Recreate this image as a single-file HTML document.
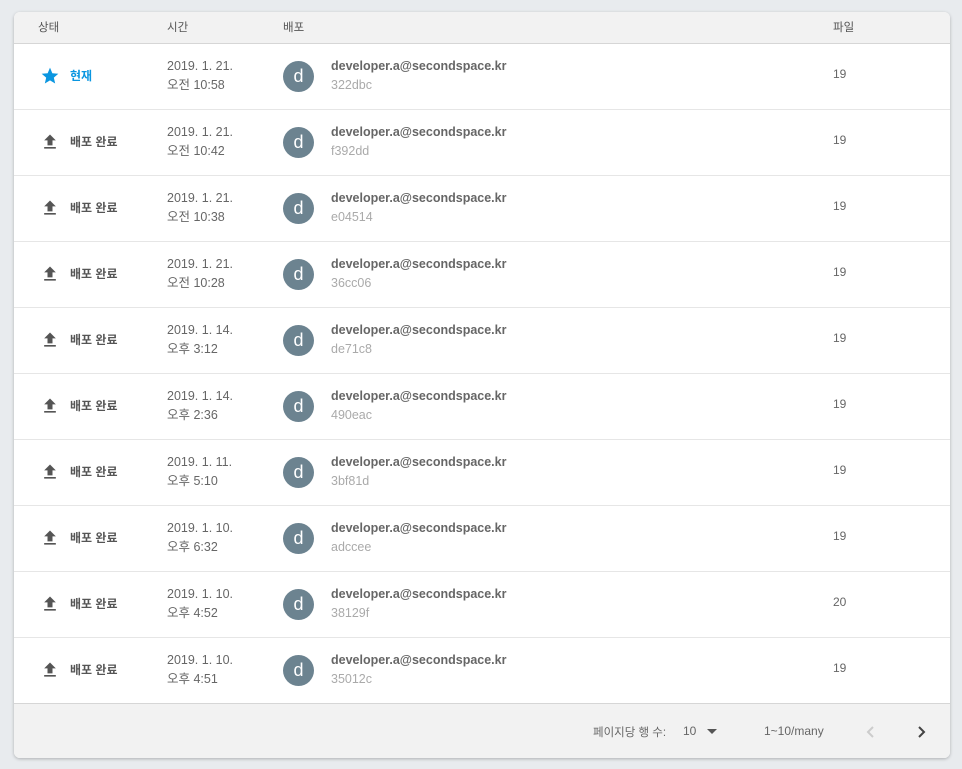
<!DOCTYPE html>
<html><head><meta charset="utf-8"><style>
*{margin:0;padding:0;box-sizing:border-box}
body{width:962px;height:769px;background:#e8ebee;font-family:"Liberation Sans","Noto Sans CJK KR",sans-serif;position:relative;overflow:hidden}
.card{position:absolute;left:14px;top:12px;width:936px;height:746px;background:#fff;border-radius:6px;box-shadow:0 1px 3px rgba(0,0,0,.25);overflow:hidden}
.hd{height:32px;background:#f2f2f2;border-bottom:1px solid #d6d6d6;position:relative;font-size:11.5px;color:#555}
.hd span{position:absolute;top:7px}
.row{height:66px;border-bottom:1px solid #e6e6e6;position:relative;font-size:12px;color:#555}
.row>*{position:absolute}
.ic{left:26px;top:22px}
.st{left:56px;top:23px;font-weight:bold;color:#555}
.tm{left:153px;top:13px;line-height:19px;color:#666;font-size:12.5px}
.av{left:269px;top:17px;width:31px;height:31px;border-radius:50%;background:#6c8390;color:#fff;font-size:18px;text-align:center;line-height:30px}
.em{left:317px;top:13px;line-height:19px;font-weight:bold;color:#666;font-size:12.5px}
.em i{font-style:normal;font-weight:normal;color:#aaa;display:block}
.fl{left:819px;top:23px;color:#666}
.ft{height:55px;background:#f2f2f2;position:relative;font-size:11.5px;color:#666}
.ft>*{position:absolute;top:20px}
</style></head><body>
<div class="card">
<div class="hd"><span style="left:24px">상태</span><span style="left:153px">시간</span><span style="left:269px">배포</span><span style="left:819px">파일</span></div>
<div class="row"><svg class="ic" width="20" height="20" viewBox="0 0 24 24"><path fill="#0a96e0" d="M12 17.3l6.2 3.7-1.6-7 5.4-4.7-7.2-.6L12 2 9.2 8.7 2 9.3l5.4 4.7-1.6 7z"/></svg><span class="st" style="color:#0a96e0">현재</span><div class="tm">2019. 1. 21.<br>오전 10:58</div><div class="av">d</div><div class="em">developer.a@secondspace.kr<i>322dbc</i></div><div class="fl">19</div></div>
<div class="row"><svg class="ic" width="20" height="20" viewBox="0 0 24 24"><path fill="#555" d="M9 16h6v-6h4l-7-7-7 7h4zm-4 2h14v2H5z"/></svg><span class="st">배포 완료</span><div class="tm">2019. 1. 21.<br>오전 10:42</div><div class="av">d</div><div class="em">developer.a@secondspace.kr<i>f392dd</i></div><div class="fl">19</div></div>
<div class="row"><svg class="ic" width="20" height="20" viewBox="0 0 24 24"><path fill="#555" d="M9 16h6v-6h4l-7-7-7 7h4zm-4 2h14v2H5z"/></svg><span class="st">배포 완료</span><div class="tm">2019. 1. 21.<br>오전 10:38</div><div class="av">d</div><div class="em">developer.a@secondspace.kr<i>e04514</i></div><div class="fl">19</div></div>
<div class="row"><svg class="ic" width="20" height="20" viewBox="0 0 24 24"><path fill="#555" d="M9 16h6v-6h4l-7-7-7 7h4zm-4 2h14v2H5z"/></svg><span class="st">배포 완료</span><div class="tm">2019. 1. 21.<br>오전 10:28</div><div class="av">d</div><div class="em">developer.a@secondspace.kr<i>36cc06</i></div><div class="fl">19</div></div>
<div class="row"><svg class="ic" width="20" height="20" viewBox="0 0 24 24"><path fill="#555" d="M9 16h6v-6h4l-7-7-7 7h4zm-4 2h14v2H5z"/></svg><span class="st">배포 완료</span><div class="tm">2019. 1. 14.<br>오후 3:12</div><div class="av">d</div><div class="em">developer.a@secondspace.kr<i>de71c8</i></div><div class="fl">19</div></div>
<div class="row"><svg class="ic" width="20" height="20" viewBox="0 0 24 24"><path fill="#555" d="M9 16h6v-6h4l-7-7-7 7h4zm-4 2h14v2H5z"/></svg><span class="st">배포 완료</span><div class="tm">2019. 1. 14.<br>오후 2:36</div><div class="av">d</div><div class="em">developer.a@secondspace.kr<i>490eac</i></div><div class="fl">19</div></div>
<div class="row"><svg class="ic" width="20" height="20" viewBox="0 0 24 24"><path fill="#555" d="M9 16h6v-6h4l-7-7-7 7h4zm-4 2h14v2H5z"/></svg><span class="st">배포 완료</span><div class="tm">2019. 1. 11.<br>오후 5:10</div><div class="av">d</div><div class="em">developer.a@secondspace.kr<i>3bf81d</i></div><div class="fl">19</div></div>
<div class="row"><svg class="ic" width="20" height="20" viewBox="0 0 24 24"><path fill="#555" d="M9 16h6v-6h4l-7-7-7 7h4zm-4 2h14v2H5z"/></svg><span class="st">배포 완료</span><div class="tm">2019. 1. 10.<br>오후 6:32</div><div class="av">d</div><div class="em">developer.a@secondspace.kr<i>adccee</i></div><div class="fl">19</div></div>
<div class="row"><svg class="ic" width="20" height="20" viewBox="0 0 24 24"><path fill="#555" d="M9 16h6v-6h4l-7-7-7 7h4zm-4 2h14v2H5z"/></svg><span class="st">배포 완료</span><div class="tm">2019. 1. 10.<br>오후 4:52</div><div class="av">d</div><div class="em">developer.a@secondspace.kr<i>38129f</i></div><div class="fl">20</div></div>
<div class="row" style="border-bottom:1px solid #d6d6d6"><svg class="ic" width="20" height="20" viewBox="0 0 24 24"><path fill="#555" d="M9 16h6v-6h4l-7-7-7 7h4zm-4 2h14v2H5z"/></svg><span class="st">배포 완료</span><div class="tm">2019. 1. 10.<br>오후 4:51</div><div class="av">d</div><div class="em">developer.a@secondspace.kr<i>35012c</i></div><div class="fl">19</div></div>
<div class="ft"><span style="left:579px">페이지당 행 수:</span><span style="left:669px;font-size:12px">10</span><svg style="left:692px;top:24px;position:absolute" width="12" height="8" viewBox="0 0 12 8"><path fill="#555" d="M1 1h10L6 6z"/></svg><span style="left:750px;font-size:12px">1~10/many</span><svg style="left:852px;top:21px;position:absolute" width="10" height="14" viewBox="0 0 10 14"><path fill="none" stroke="#ccc" stroke-width="2" d="M7 2 2 7l5 5"/></svg><svg style="left:902px;top:21px;position:absolute" width="10" height="14" viewBox="0 0 10 14"><path fill="none" stroke="#444" stroke-width="2" d="M3 2l5 5-5 5"/></svg></div>
</div>
</body></html>
